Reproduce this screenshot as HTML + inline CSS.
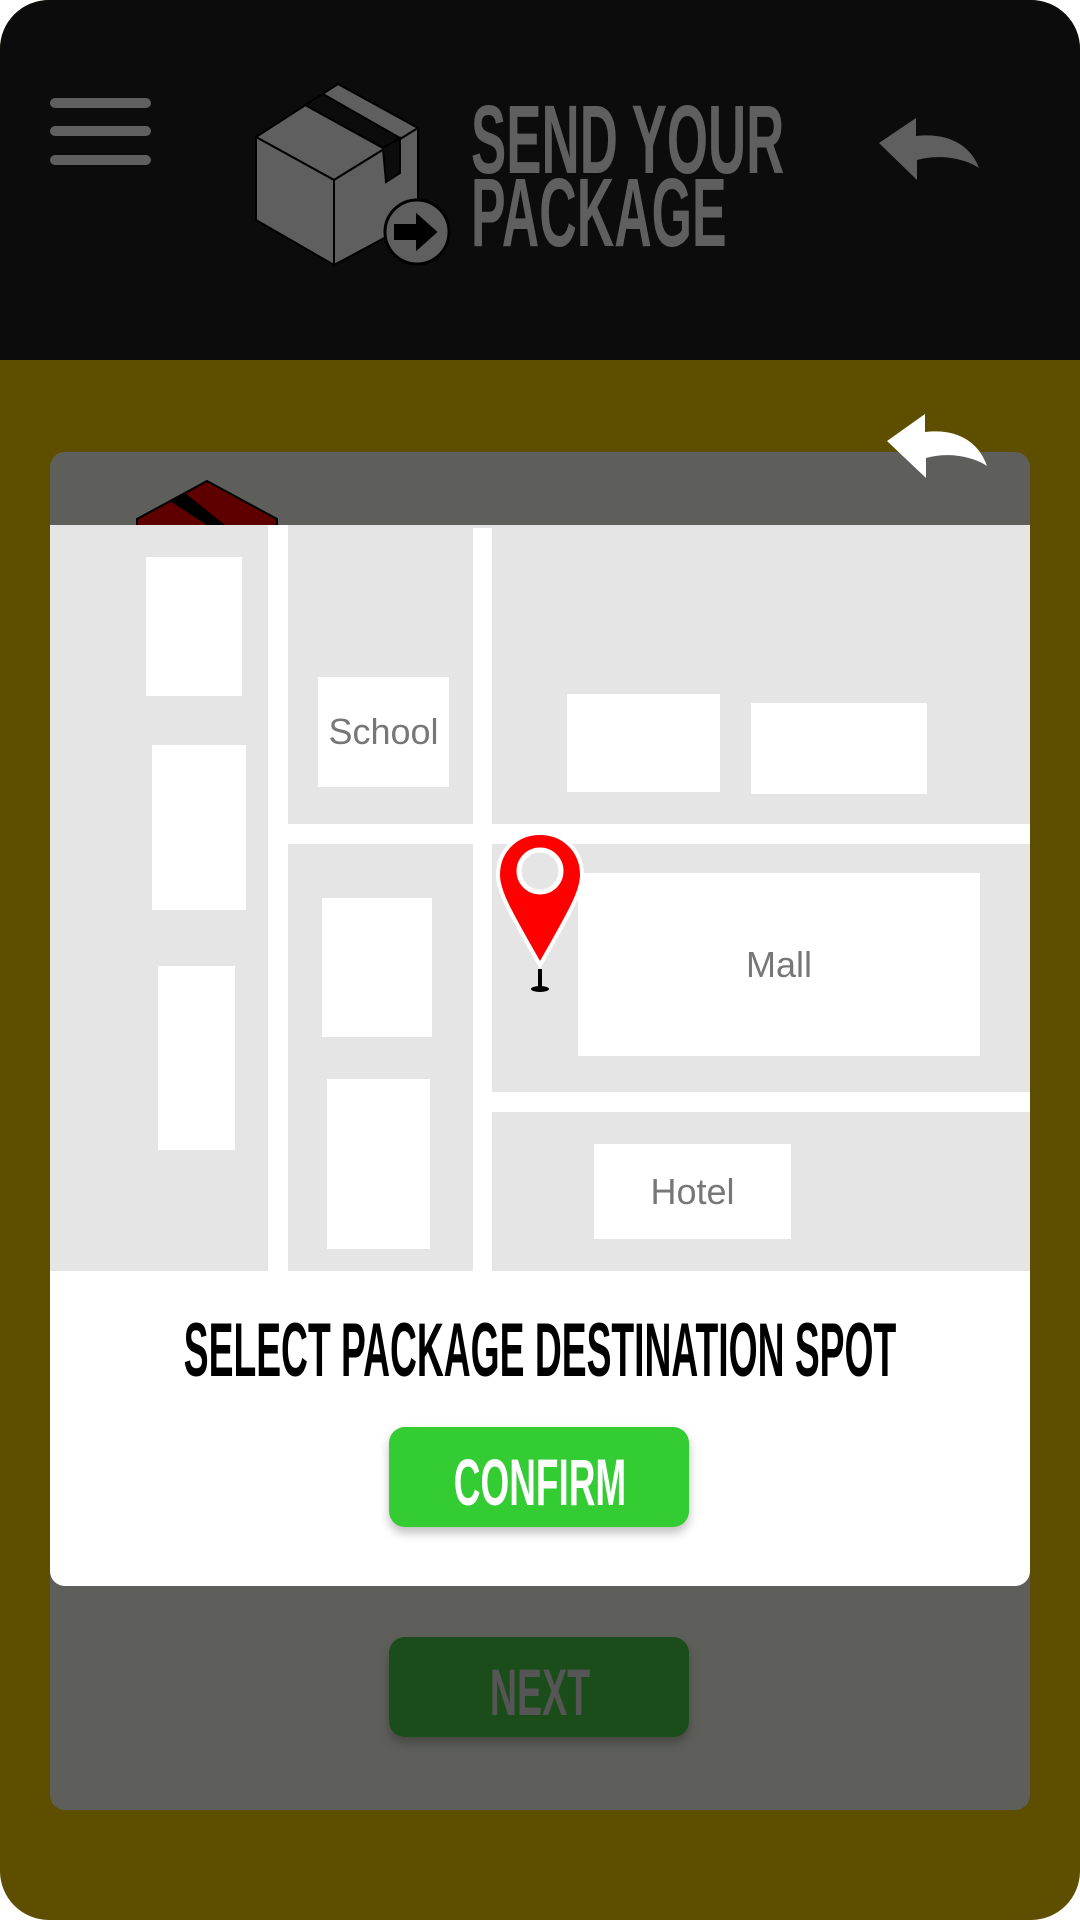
<!DOCTYPE html>
<html><head><style>
html,body{margin:0;padding:0;width:1080px;height:1920px;overflow:hidden;background:#fff;}
.root{position:absolute;left:0;top:0;width:1080px;height:1920px;background:#5e4f00;border-radius:49px;overflow:hidden;}
.hdr{position:absolute;left:0;top:0;width:1080px;height:360px;background:#0c0c0c;}
.bar{position:absolute;left:50px;width:101px;height:10px;border-radius:5px;background:#5f5f5f;}
.t{position:absolute;font-family:"Liberation Sans",sans-serif;font-weight:bold;white-space:nowrap;line-height:1;}
.card{position:absolute;left:50px;top:452px;width:980px;height:1358px;background:#5e5f5a;border-radius:15px;}
.map{position:absolute;left:50px;top:525px;width:980px;height:746px;background:#e5e5e5;overflow:hidden;}
.b{position:absolute;background:#fff;}
.lbl{position:absolute;font-family:"Liberation Sans",sans-serif;color:#777;font-size:36px;display:flex;align-items:center;justify-content:center;}
.panel{position:absolute;left:50px;top:1271px;width:980px;height:315px;background:#fff;border-radius:0 0 15px 15px;}
.btn{position:absolute;left:389px;width:300px;height:100px;border-radius:16px;}
</style></head><body>
<div class="root">
<div class="hdr">
  <div class="bar" style="top:98px"></div>
  <div class="bar" style="top:126px"></div>
  <div class="bar" style="top:155px"></div>
  <svg style="position:absolute;left:250px;top:80px" width="210" height="195" viewBox="0 0 210 195">
    <g stroke="#000" stroke-width="2" fill="#5f5f5f">
      <polygon points="6,57 88,4 168,48 84,100"/>
      <polygon points="6,57 84,100 84,185 6,140"/>
      <polygon points="84,100 168,48 168,140 84,185"/>
      <polygon points="55,25 73,14 150,58 133,68" fill="#0c0c0c"/>
      <polygon points="133,68 150,58 150,93 136,102" fill="#0c0c0c"/>
      <circle cx="167" cy="152" r="32" fill="#5f5f5f" stroke="#000" stroke-width="3"/>
      <polygon points="145,145 167,145 167,135 186,152 167,169 167,159 145,159" fill="#000"/>
    </g>
  </svg>
  <div class="t" style="left:471px;top:91px;font-size:97px;color:#5f5f5f;transform:scaleX(0.545);transform-origin:0 0;">SEND YOUR</div>
  <div class="t" style="left:471px;top:164px;font-size:97px;color:#5f5f5f;transform:scaleX(0.535);transform-origin:0 0;">PACKAGE</div>
  <svg style="position:absolute;left:879px;top:118px" width="102" height="64" viewBox="0 0 102 64">
    <path d="M0,25 L37,0 L37,18 C70,14 92,28 100,50 C85,40 60,36 38,42 L38,62 Z" fill="#5f5f5f"/>
  </svg>
</div>
<div class="card"></div>
<svg style="position:absolute;left:887px;top:414px" width="102" height="64" viewBox="0 0 102 64">
  <path d="M0,27 L38,0 L38,18 C70,14 92,28 100,52 C85,42 60,38 39,44 L39,64 Z" fill="#fff"/>
</svg>
<svg style="position:absolute;left:135px;top:479px" width="145" height="50" viewBox="0 0 145 50">
  <polygon points="2,40 72,2 142,40 142,50 2,50" fill="#5e0000" stroke="#000" stroke-width="2"/>
  <polygon points="35,22 50,14 95,50 78,50" fill="#000"/>
</svg>
<div class="map">
  <div class="b" style="left:218px;top:0;width:20px;height:746px"></div>
  <div class="b" style="left:423px;top:3px;width:19px;height:743px"></div>
  <div class="b" style="left:238px;top:299px;width:742px;height:20px"></div>
  <div class="b" style="left:442px;top:567px;width:538px;height:20px"></div>
  <div class="b" style="left:96px;top:32px;width:96px;height:139px"></div>
  <div class="b" style="left:102px;top:220px;width:94px;height:165px"></div>
  <div class="b" style="left:108px;top:441px;width:77px;height:184px"></div>
  <div class="b lbl" style="left:268px;top:152px;width:131px;height:110px">School</div>
  <div class="b" style="left:517px;top:169px;width:153px;height:98px"></div>
  <div class="b" style="left:701px;top:178px;width:176px;height:91px"></div>
  <div class="b" style="left:272px;top:373px;width:110px;height:139px"></div>
  <div class="b" style="left:277px;top:554px;width:103px;height:170px"></div>
  <div class="b lbl" style="left:528px;top:348px;width:402px;height:183px">Mall</div>
  <div class="b lbl" style="left:544px;top:619px;width:197px;height:95px">Hotel</div>
  <svg style="position:absolute;left:444px;top:304px" width="92" height="168" viewBox="0 0 92 168">
    <path d="M46,4 C22,4 4,22 4,46 C4,62 14,80 46,136 C78,80 88,62 88,46 C88,22 70,4 46,4 Z" fill="#f00" stroke="#fff" stroke-width="4"/>
    <circle cx="46" cy="42" r="21" fill="#e5e5e5" stroke="#fff" stroke-width="5"/>
    <rect x="44" y="140" width="4" height="20" fill="#000"/>
    <ellipse cx="46" cy="160" rx="9" ry="3" fill="#000"/>
  </svg>
</div>
<div class="panel"></div>
<div class="t" style="left:540px;top:1313px;font-size:76px;color:#000;transform:translateX(-50%) scaleX(0.49);">SELECT PACKAGE DESTINATION SPOT</div>
<div class="btn" style="top:1427px;background:#33cc33;box-shadow:0 6px 10px rgba(0,0,0,0.25);"></div>
<div class="t" style="left:540px;top:1449px;font-size:66px;color:#fff;transform:translateX(-50%) scaleX(0.56);">CONFIRM</div>
<div class="btn" style="top:1637px;background:#1a4d1a;box-shadow:0 6px 10px rgba(0,0,0,0.25);"></div>
<div class="t" style="left:540px;top:1659px;font-size:66px;color:#555;transform:translateX(-50%) scaleX(0.57);">NEXT</div>
</div>
</body></html>
